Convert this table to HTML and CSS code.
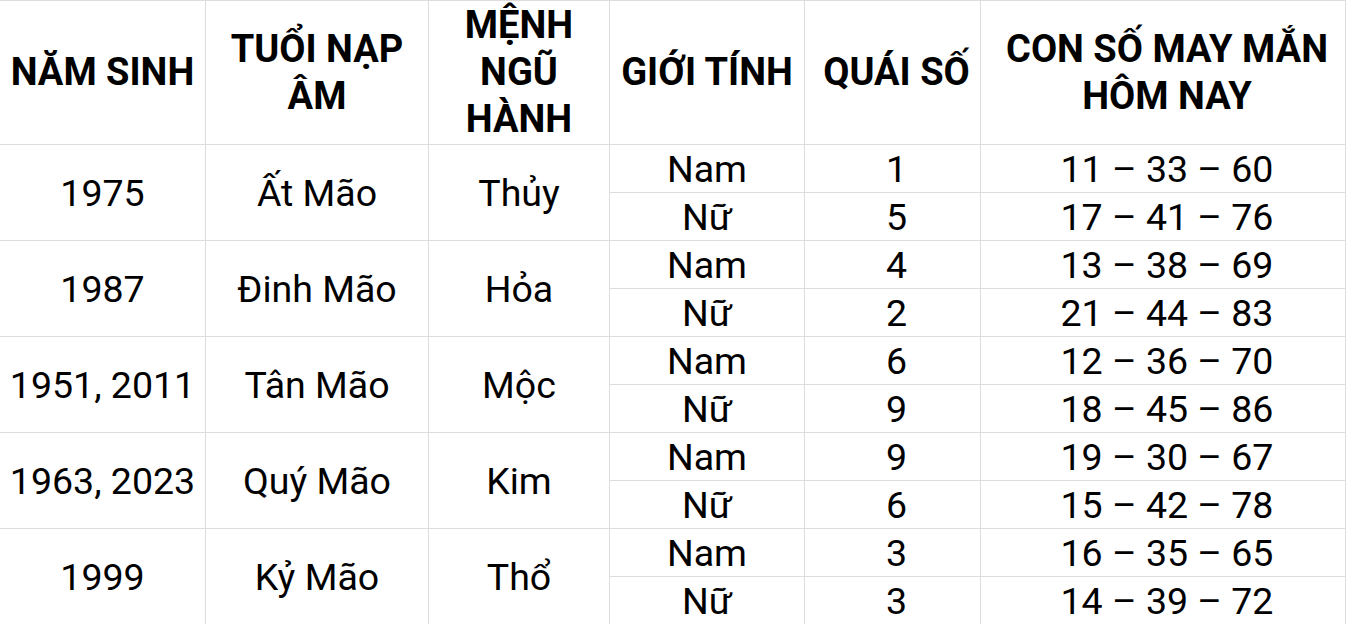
FILE: index.html
```html
<!DOCTYPE html>
<html lang="vi">
<head>
<meta charset="utf-8">
<title>Con số may mắn tuổi Mão</title>
<link rel="stylesheet" href="styles.css">
</head>
<body>
<table class="lucky">
  <colgroup>
    <col class="c-year">
    <col class="c-tuoi">
    <col class="c-menh">
    <col class="c-gioi">
    <col class="c-quai">
    <col class="c-so">
  </colgroup>
  <thead>
    <tr>
      <th>NĂM SINH</th>
      <th>TUỔI NẠP ÂM</th>
      <th>MỆNH NGŨ HÀNH</th>
      <th>GIỚI TÍNH</th>
      <th>QUÁI SỐ</th>
      <th>CON SỐ MAY MẮN HÔM NAY</th>
    </tr>
  </thead>
  <tbody>
    <tr>
      <td rowspan="2">1975</td>
      <td rowspan="2">Ất Mão</td>
      <td rowspan="2">Thủy</td>
      <td>Nam</td><td>1</td><td>11 – 33 – 60</td>
    </tr>
    <tr><td>Nữ</td><td>5</td><td>17 – 41 – 76</td></tr>
    <tr>
      <td rowspan="2">1987</td>
      <td rowspan="2">Đinh Mão</td>
      <td rowspan="2">Hỏa</td>
      <td>Nam</td><td>4</td><td>13 – 38 – 69</td>
    </tr>
    <tr><td>Nữ</td><td>2</td><td>21 – 44 – 83</td></tr>
    <tr>
      <td rowspan="2">1951, 2011</td>
      <td rowspan="2">Tân Mão</td>
      <td rowspan="2">Mộc</td>
      <td>Nam</td><td>6</td><td>12 – 36 – 70</td>
    </tr>
    <tr><td>Nữ</td><td>9</td><td>18 – 45 – 86</td></tr>
    <tr>
      <td rowspan="2">1963, 2023</td>
      <td rowspan="2">Quý Mão</td>
      <td rowspan="2">Kim</td>
      <td>Nam</td><td>9</td><td>19 – 30 – 67</td>
    </tr>
    <tr><td>Nữ</td><td>6</td><td>15 – 42 – 78</td></tr>
    <tr>
      <td rowspan="2">1999</td>
      <td rowspan="2">Kỷ Mão</td>
      <td rowspan="2">Thổ</td>
      <td>Nam</td><td>3</td><td>16 – 35 – 65</td>
    </tr>
    <tr><td>Nữ</td><td>3</td><td>14 – 39 – 72</td></tr>
  </tbody>
</table>
</body>
</html>
```
FILE: styles.css
```css
html, body {
  margin: 0;
  padding: 0;
  background: #ffffff;
}

.lucky {
  table-layout: fixed;
  width: 1346px;
  border-collapse: separate;
  border-spacing: 0;
  border-top: 1px solid #dddddd;
  font-family: Roboto, "Liberation Sans", Arial, sans-serif;
  font-size: 37.5px;
  color: #000000;
}

.c-year { width: 206px; }
.c-tuoi { width: 223px; }
.c-menh { width: 181px; }
.c-gioi { width: 195px; }
.c-quai { width: 176px; }
.c-so { width: 365px; }

.lucky th,
.lucky td {
  box-sizing: border-box;
  padding: 0 2px;
  border-right: 1px solid #dddddd;
  border-bottom: 1px solid #dddddd;
  text-align: center;
  vertical-align: middle;
}

.lucky th:nth-last-child(-n+2),
.lucky td:nth-last-child(-n+2) {
  padding-left: 10px;
  padding-right: 2px;
}

.lucky th {
  height: 144px;
  font-size: 38px;
  font-weight: 700;
  line-height: 47px;
}

.lucky td {
  height: 48px;
  font-weight: 400;
  line-height: 40px;
}
```
